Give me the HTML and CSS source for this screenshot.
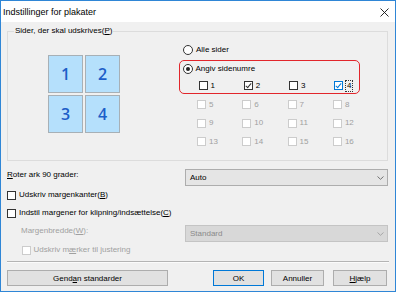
FILE: index.html
```html
<!DOCTYPE html>
<html lang="da">
<head>
  <meta charset="UTF-8">
  <title>Indstillinger for plakater</title>
  <link rel="stylesheet" href="styles.css">
</head>
<body>

<div class="window">
  <div class="titlebar">
    <span class="title">Indstillinger for plakater</span>
    <svg class="close" width="9" height="9" viewBox="0 0 9 9"><path d="M0.5 0.5 L8.5 8.5 M8.5 0.5 L0.5 8.5" stroke="#111" stroke-width="0.9" fill="none"/></svg>
  </div>

  <div class="main">
    <div class="group">
      <div class="group-title">Sider, der skal udskrives(<u>P</u>)</div>

      <div class="tiles">
        <div class="tile">1</div>
        <div class="tile">2</div>
        <div class="tile">3</div>
        <div class="tile">4</div>
      </div>

      <div class="options">
        <div class="radio-row first">
          <span class="radio"></span>Alle sider
        </div>

        <div class="highlight">
          <div class="radio-row">
            <span class="radio on"></span>Angiv sidenumre
          </div>
          <div class="pages">
            <div class="check-row"><span class="box"></span>1</div>
            <div class="check-row"><span class="box checked"></span>2</div>
            <div class="check-row"><span class="box"></span>3</div>
            <div class="check-row"><span class="box checked focus"></span><span class="focus-label">4</span></div>
          </div>
        </div>

        <div class="pages disabled">
          <div class="check-row"><span class="box"></span>5</div>
          <div class="check-row"><span class="box"></span>6</div>
          <div class="check-row"><span class="box"></span>7</div>
          <div class="check-row"><span class="box"></span>8</div>
          <div class="check-row"><span class="box"></span>9</div>
          <div class="check-row"><span class="box"></span>10</div>
          <div class="check-row"><span class="box"></span>11</div>
          <div class="check-row"><span class="box"></span>12</div>
          <div class="check-row"><span class="box"></span>13</div>
          <div class="check-row"><span class="box"></span>14</div>
          <div class="check-row"><span class="box"></span>15</div>
          <div class="check-row"><span class="box"></span>16</div>
        </div>
      </div>
    </div>

    <div class="field-row rotate">
      <div class="field-label"><u>R</u>oter ark 90 grader:</div>
      <div class="combo">Auto<svg class="chevron" width="7" height="4" viewBox="0 0 7 4"><path d="M0.5 0.5 L3.5 3.3 L6.5 0.5" stroke="#555" stroke-width="0.8" fill="none"/></svg></div>
    </div>

    <div class="check-row line-b"><span class="box"></span>Udskriv margenkanter(<u>B</u>)</div>
    <div class="check-row line-c"><span class="box"></span>Indstil margener for klipning/indsættelse(<u>C</u>)</div>

    <div class="field-row margin disabled">
      <div class="field-label indent">Margenbredde(<u>W</u>):</div>
      <div class="combo off">Standard<svg class="chevron" width="7" height="4" viewBox="0 0 7 4"><path d="M0.5 0.5 L3.5 3.3 L6.5 0.5" stroke="#9a9a9a" stroke-width="0.8" fill="none"/></svg></div>
    </div>

    <div class="check-row line-d disabled"><span class="box"></span>Udskriv m<u>æ</u>rker til justering</div>

    <div class="separator"></div>

    <div class="buttons">
      <button class="btn reset">Gend<u>a</u>n standarder</button>
      <div class="btn-group">
        <button class="btn ok">OK</button>
        <button class="btn cancel">Annuller</button>
        <button class="btn help"><u>H</u>jælp</button>
      </div>
    </div>
  </div>
</div>

</body>
</html>
```

FILE: styles.css
```css
body {
  margin: 0;
  font-family: "Liberation Sans", Arial, sans-serif;
  font-size: 8px;
  color: #000;
}
u {
  text-decoration: underline;
  text-underline-offset: 1px;
}
.window {
  width: 396px;
  height: 292px;
  box-sizing: border-box;
  border: 1px solid #2f86d6;
  background: #f0f0f0;
}
.titlebar {
  height: 21px;
  background: #fff;
  display: flex;
  align-items: center;
  justify-content: space-between;
  padding: 0 6px 0 2px;
}
.title {
  font-size: 9px;
  margin-top: 0;
}
.close {
  margin-top: 1px;
}
.main {
  padding: 0 6px;
}

/* group box */
.group {
  position: relative;
  margin-top: 9px;
  height: 130px;
  box-sizing: border-box;
  border: 1px solid #dcdcdc;
  margin-right: 1px;
  display: flex;
}
.group-title {
  position: absolute;
  top: -7px;
  left: 6px;
  padding: 0 1px;
  background: #f0f0f0;
  line-height: 12px;
}
.tiles {
  display: grid;
  grid-template-columns: repeat(2, 35px);
  grid-template-rows: repeat(2, 38px);
  gap: 2px;
  margin: 23px 0 0 40px;
  align-self: flex-start;
}
.tile {
  background: #b5e0fc;
  border: 1px solid #a7b0b6;
  display: flex;
  align-items: center;
  justify-content: center;
  font-family: "Open Sans", sans-serif;
  font-weight: 600;
  font-size: 16px;
  color: #1d5ec8;
}
.options {
  margin-left: 59px;
  width: 182px;
}
.radio-row {
  display: flex;
  align-items: center;
  height: 12px;
  line-height: 12px;
}
.radio-row.first {
  margin-top: 12px;
  padding-left: 4px;
}
.radio {
  width: 8px;
  height: 8px;
  border: 1px solid #333;
  border-radius: 50%;
  background: #fff;
  margin-right: 3px;
  position: relative;
}
.radio.on::after {
  content: "";
  position: absolute;
  left: 2px;
  top: 2px;
  width: 4px;
  height: 4px;
  border-radius: 50%;
  background: #222;
}
.highlight {
  margin-top: 4px;
  border: 1.5px solid #e2262b;
  border-radius: 5px;
  padding: 1.5px 0 1px 2.5px;
  width: 176px;
}
.highlight .pages {
  margin-top: 5px;
  padding-left: 16px;
}
.pages {
  display: grid;
  grid-template-columns: repeat(4, 45.3px);
  row-gap: 6.5px;
  padding-left: 18px;
}
.pages.disabled {
  margin-top: 5px;
}
.check-row {
  display: flex;
  align-items: center;
  height: 12px;
  line-height: 12px;
}
.box {
  width: 7px;
  height: 7px;
  border: 1px solid #333;
  background: #fff;
  margin-right: 3px;
  position: relative;
  flex: none;
}
.box.checked::after {
  content: "";
  position: absolute;
  left: 2px;
  top: 0px;
  width: 2px;
  height: 5px;
  border: solid #333;
  border-width: 0 1px 1px 0;
  transform: rotate(40deg);
}
.box.focus {
  border-color: #0078d7;
}
.box.focus::after {
  border-color: #0078d7;
}
.focus-label {
  outline: 1px dotted #333;
  outline-offset: 0;
  line-height: 10px;
  padding: 0 0.5px;
}
.disabled {
  color: #a0a0a0;
}
.disabled .box {
  border-color: #cccccc;
}

/* lower fields */
.field-row {
  display: flex;
  align-items: flex-start;
}
.field-label {
  width: 178px;
  line-height: 12px;
}
.field-label.indent {
  padding-left: 14px;
  box-sizing: border-box;
}
.rotate {
  margin-top: 8px;
}
.combo {
  width: 203px;
  height: 17px;
  box-sizing: border-box;
  border: 1px solid #adadad;
  background: #e5e5e5;
  display: flex;
  align-items: center;
  justify-content: space-between;
  padding: 0 3px 0 4px;
}
.combo.off {
  background: #d8d8d8;
  border-color: #c4c4c4;
  color: #8a8a8a;
}
.line-b {
  margin-top: 3px;
}
.line-c {
  margin-top: 6px;
}
.margin {
  margin-top: 6px;
}
.line-d {
  margin-top: 2px;
  padding-left: 14.5px;
}
.separator {
  margin-top: 5px;
  height: 0;
  border-top: 1px solid #b4b4b4;
  border-bottom: 1px solid #fbfbfb;
}
.buttons {
  display: flex;
  justify-content: space-between;
  margin-top: 7px;
}
.btn {
  font-family: "Liberation Sans", Arial, sans-serif;
  font-size: 8px;
  height: 16px;
  padding: 0;
  background: #e1e1e1;
  border: 1px solid #adadad;
  color: #000;
}
.reset {
  width: 161px;
}
.btn-group {
  display: flex;
  gap: 7px;
  margin-right: 2px;
}
.ok {
  width: 51px;
  border-color: #0078d7;
}
.cancel {
  width: 53px;
}
.help {
  width: 54px;
  margin-left: 2px;
}
```
